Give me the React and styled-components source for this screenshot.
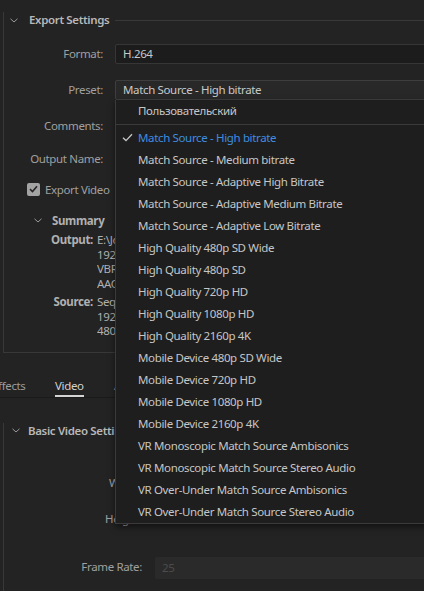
import React from "react";
import styled, { createGlobalStyle } from "styled-components";

const GlobalStyle = createGlobalStyle`
  html, body { margin: 0; padding: 0; background: #232323; }
  #root { width: 424px; height: 591px; }
  * { box-sizing: border-box; }
`;

const Page = styled.div`
  position: relative;
  width: 424px;
  height: 591px;
  overflow: hidden;
  background: #232323;
  font-family: "Noto Sans", "Open Sans", sans-serif;
  font-size: 11.5px;
  letter-spacing: -0.35px;
  color: #a0a0a0;
`;

const Group = styled.section`
  margin: ${(p) => p.$top}px -40px 0 3px;
  border-left: 1px solid #383838;
  border-bottom: ${(p) => (p.$closed ? "1px solid #383838" : "none")};
  padding-bottom: ${(p) => p.$pb || 0}px;
  min-height: ${(p) => p.$minH || 0}px;
`;

const GroupHeader = styled.div`
  display: flex;
  align-items: center;
  height: 16px;
  margin-top: -8px;
`;

const ChevronBox = styled.span`
  display: inline-flex;
  width: 8px;
  height: 16px;
  align-items: center;
  margin-left: ${(p) => p.$ml}px;
  flex: none;
`;

const GroupTitle = styled.span`
  margin-left: ${(p) => p.$ml}px;
  padding-bottom: 1px;
  font-weight: 600;
  color: #b8b8b8;
  white-space: nowrap;
`;

const Rule = styled.span`
  flex: 1;
  height: 1px;
  margin-left: 6px;
  background: #383838;
`;

const FieldRow = styled.div`
  display: flex;
  align-items: center;
  height: ${(p) => p.$h || 20}px;
  margin-top: ${(p) => p.$mt}px;
`;

const Label = styled.div`
  flex: none;
  width: ${(p) => p.$w}px;
  padding-right: ${(p) => p.$gap}px;
  padding-bottom: 2px;
  text-align: right;
  white-space: nowrap;
  color: #a0a0a0;
`;

const Field = styled.div`
  flex: 1;
  align-self: stretch;
  display: flex;
  align-items: center;
  padding-left: ${(p) => p.$pl || 7}px;
  padding-bottom: 1px;
  border-radius: 2px;
  white-space: nowrap;
  background: ${(p) => p.$bg};
  border: 1px solid ${(p) => p.$border || "transparent"};
  color: ${(p) => p.$color || "#c8c8c8"};
`;

const CheckRow = styled.label`
  display: flex;
  align-items: center;
  height: 14px;
  margin: 13px 0 0 23px;
  color: #a0a0a0;
`;

const CheckBox = styled.span`
  width: 13px;
  height: 13px;
  border-radius: 2px;
  background: #a3a3a3;
  display: inline-flex;
  align-items: center;
  justify-content: center;
  margin-right: 5px;
`;

const SubHeader = styled.div`
  display: flex;
  align-items: center;
  height: 16px;
  margin-top: 16px;
`;

const SubTitle = styled.span`
  margin-left: 10px;
  font-weight: 700;
  color: #b0b0b0;
`;

const SummaryGrid = styled.div`
  display: grid;
  grid-template-columns: 89px 1fr;
  column-gap: 4px;
  width: 112px;
  overflow: hidden;
  line-height: 14.5px;
  margin-top: ${(p) => p.$mt}px;
  color: #b0b0b0;
`;

const SumKey = styled.div`
  text-align: right;
  font-weight: 700;
  white-space: nowrap;
`;

const SumVal = styled.div`
  white-space: nowrap;
  overflow: hidden;
`;

const TabBar = styled.div`
  display: flex;
  height: 25px;
  margin-top: 20px;
  border-bottom: 1px solid #1a1a1a;
`;

const Tab = styled.div`
  flex: none;
  width: ${(p) => p.$w}px;
  margin-left: ${(p) => p.$ml || 0}px;
  padding-top: 5px;
`;

const TabText = styled.span`
  display: inline-block;
  line-height: 14px;
  padding-bottom: 2px;
  border-bottom: 2px solid ${(p) => (p.$active ? "#d4d4d4" : "transparent")};
  color: ${(p) => (p.$active ? "#d2d2d2" : "#9c9c9c")};
  white-space: nowrap;
`;

const Menu = styled.ul`
  position: absolute;
  left: 115px;
  top: 100px;
  width: 330px;
  margin: 0;
  padding: 0;
  list-style: none;
  background: #1e1e1e;
  border: 1px solid #3a3a3a;
  border-top: none;
  box-shadow: 0 3px 6px rgba(0, 0, 0, 0.5);
  z-index: 10;
`;

const MenuItem = styled.li`
  display: flex;
  align-items: center;
  height: 22px;
  padding-bottom: 2px;
  white-space: nowrap;
  color: ${(p) => (p.$selected ? "#3f8de0" : "#c6c6c6")};
`;

const CheckSlot = styled.span`
  flex: none;
  width: 22px;
  display: inline-flex;
  justify-content: center;
  padding-left: 1px;
`;

const MenuSeparator = styled.li`
  height: 1px;
  margin: 2px 0;
  background: #3a3a3a;
`;

const Chevron = () => (
  <svg width="8" height="5" viewBox="0 0 8 5">
    <polyline points="0.5,0.8 4,4 7.5,0.8" fill="none" stroke="#9a9a9a" strokeWidth="1" />
  </svg>
);

const presets = [
  "Match Source - High bitrate",
  "Match Source - Medium bitrate",
  "Match Source - Adaptive High Bitrate",
  "Match Source - Adaptive Medium Bitrate",
  "Match Source - Adaptive Low Bitrate",
  "High Quality 480p SD Wide",
  "High Quality 480p SD",
  "High Quality 720p HD",
  "High Quality 1080p HD",
  "High Quality 2160p 4K",
  "Mobile Device 480p SD Wide",
  "Mobile Device 720p HD",
  "Mobile Device 1080p HD",
  "Mobile Device 2160p 4K",
  "VR Monoscopic Match Source Ambisonics",
  "VR Monoscopic Match Source Stereo Audio",
  "VR Over-Under Match Source Ambisonics",
  "VR Over-Under Match Source Stereo Audio",
];

export default function App() {
  return (
    <Page>
      <GlobalStyle />
      <Group $top={20} $closed $pb={13}>
        <GroupHeader>
          <ChevronBox $ml={6}>
            <Chevron />
          </ChevronBox>
          <GroupTitle $ml={11}>Export Settings</GroupTitle>
          <Rule />
        </GroupHeader>

        <FieldRow $mt={16}>
          <Label $w={111} $gap={12}>Format:</Label>
          <Field $bg="#1c1c1c" $border="#363636">H.264</Field>
        </FieldRow>
        <FieldRow $mt={16}>
          <Label $w={111} $gap={12}>Preset:</Label>
          <Field $bg="#282828" $border="#3e3e3e">Match Source - High bitrate</Field>
        </FieldRow>
        <FieldRow $mt={14} $h={24}>
          <Label $w={111} $gap={12}>Comments:</Label>
          <Field $bg="#1c1c1c" $border="#363636" />
        </FieldRow>
        <FieldRow $mt={11}>
          <Label $w={111} $gap={12}>Output Name:</Label>
          <Field $bg="transparent" />
        </FieldRow>

        <CheckRow>
          <CheckBox>
            <svg width="9" height="8" viewBox="0 0 9 8">
              <polyline points="1,4.2 3.5,6.6 8,1.2" fill="none" stroke="#262626" strokeWidth="1.6" />
            </svg>
          </CheckBox>
          Export Video
        </CheckRow>

        <SubHeader>
          <ChevronBox $ml={30}>
            <Chevron />
          </ChevronBox>
          <SubTitle>Summary</SubTitle>
        </SubHeader>

        <SummaryGrid $mt={5}>
          <SumKey>Output:</SumKey>
          <SumVal>E:\Jobs\Sequence 01.mp4</SumVal>
          <span />
          <SumVal>1920x1080 (1,0), 25 fps, Progressive, 00:00:10:00</SumVal>
          <span />
          <SumVal>VBR, 1 pass, Target 10,00 Mbps, Max 12,00 Mbps</SumVal>
          <span />
          <SumVal>AAC, 320 kbps, 48 kHz, Stereo</SumVal>
        </SummaryGrid>
        <SummaryGrid $mt={4}>
          <SumKey>Source:</SumKey>
          <SumVal>Sequence, Sequence 01</SumVal>
          <span />
          <SumVal>1920x1080 (1,0), 25 fps, Progressive, 00:00:10:00</SumVal>
          <span />
          <SumVal>48000 Hz, Stereo</SumVal>
        </SummaryGrid>
      </Group>

      <TabBar>
        <Tab $w={63} $ml={-8}>
          <TabText>Effects</TabText>
        </Tab>
        <Tab $w={59}>
          <TabText $active>Video</TabText>
        </Tab>
        <Tab $w={60}>
          <TabText>Audio</TabText>
        </Tab>
      </TabBar>

      <Group $top={33} $minH={200}>
        <GroupHeader>
          <ChevronBox $ml={8}>
            <Chevron />
          </ChevronBox>
          <GroupTitle $ml={8}>Basic Video Settings</GroupTitle>
          <Rule />
        </GroupHeader>
        <FieldRow $mt={35}>
          <Label $w={151} $gap={13}>Width:</Label>
          <Field $bg="transparent" />
        </FieldRow>
        <FieldRow $mt={16}>
          <Label $w={151} $gap={13}>Height:</Label>
          <Field $bg="transparent" />
        </FieldRow>
        <FieldRow $mt={27} $h={22}>
          <Label $w={151} $gap={13}>Frame Rate:</Label>
          <Field $bg="#2a2a2a" $pl={6} $color="#4c4c4c">25</Field>
        </FieldRow>
      </Group>

      <Menu>
        <MenuItem>
          <CheckSlot />
          Пользовательский
        </MenuItem>
        <MenuSeparator />
        {presets.map((name, i) => (
          <MenuItem key={name} $selected={i === 0}>
            <CheckSlot>
              {i === 0 && (
                <svg width="11" height="9" viewBox="0 0 11 9">
                  <polyline points="1,4.8 4,7.6 10,1.2" fill="none" stroke="#c8c8c8" strokeWidth="1.3" />
                </svg>
              )}
            </CheckSlot>
            {name}
          </MenuItem>
        ))}
      </Menu>
    </Page>
  );
}
